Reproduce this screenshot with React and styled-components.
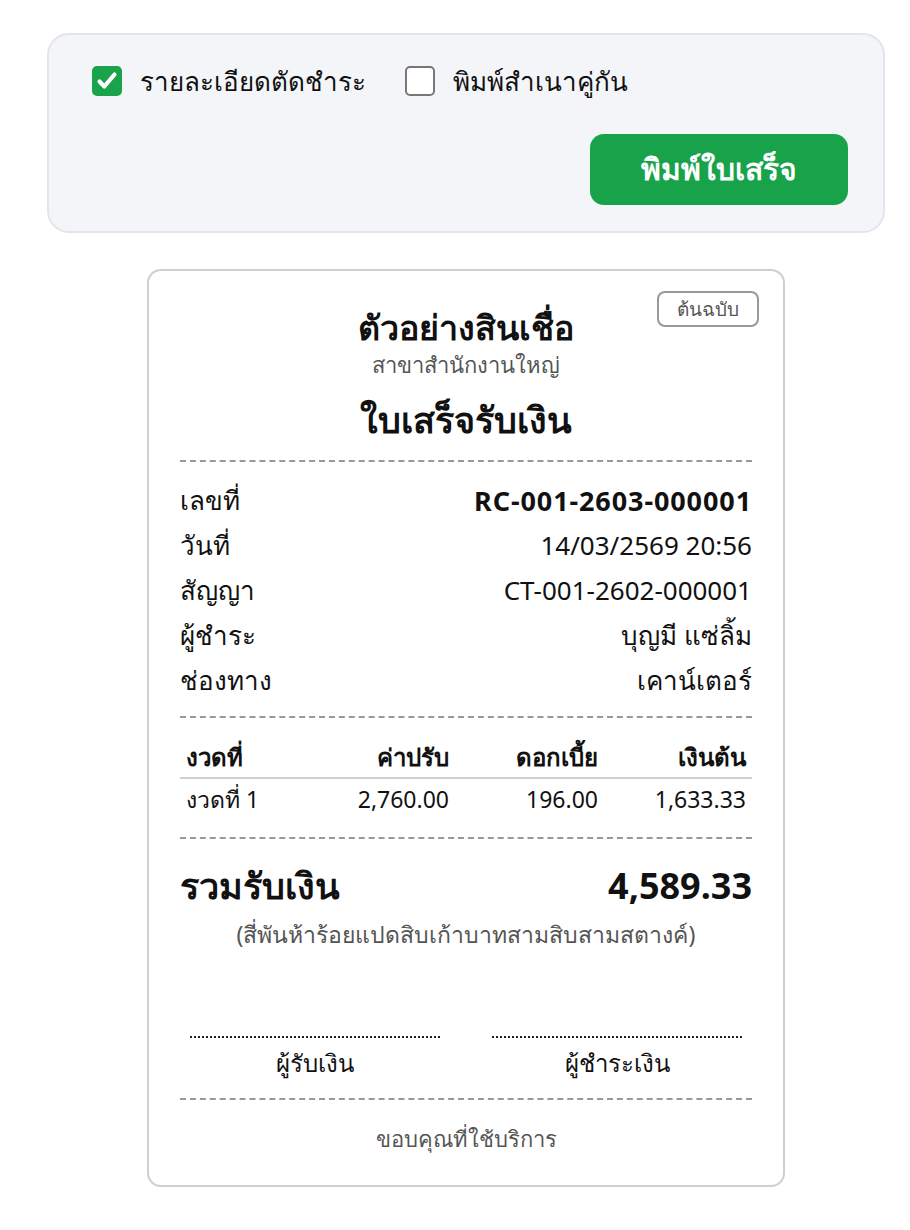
import React, { useState } from 'react'
import styled, { createGlobalStyle } from 'styled-components'

const GlobalStyle = createGlobalStyle`
  body {
    margin: 0;
    background: #ffffff;
    font-family: "Noto Sans", "Open Sans", sans-serif;
    color: #111;
  }
`

const Page = styled.div`
  width: 838px;
  margin-left: 47px;
  padding-top: 33px;
  padding-bottom: 40px;
  display: flex;
  flex-direction: column;
  align-items: center;
  gap: 36px;
`

const Panel = styled.div`
  box-sizing: border-box;
  width: 100%;
  background: #f4f5f9;
  border: 2px solid #e3e5ec;
  border-radius: 22px;
  padding: 28px 35px 26px 43px;
  display: flex;
  flex-direction: column;
  gap: 35px;
`

const OptionRow = styled.div`
  display: flex;
  align-items: center;
  gap: 39px;
`

const Option = styled.label`
  display: flex;
  align-items: center;
  gap: 18px;
  font-size: 26px;
  line-height: 36px;
  cursor: pointer;
`

const Box = styled.span`
  box-sizing: border-box;
  width: 30px;
  height: 30px;
  border-radius: 5px;
  display: flex;
  align-items: center;
  justify-content: center;
  background: ${p => (p.checked ? '#1aa34a' : '#fff')};
  border: 2px solid ${p => (p.checked ? '#1aa34a' : '#777')};
`

const ButtonRow = styled.div`
  display: flex;
  justify-content: flex-end;
`

const PrintButton = styled.button`
  width: 258px;
  height: 71px;
  border: none;
  border-radius: 14px;
  background: #18a34a;
  color: #fff;
  font-family: inherit;
  font-size: 30px;
  font-weight: 700;
  cursor: pointer;
`

const Receipt = styled.div`
  position: relative;
  box-sizing: border-box;
  width: 638px;
  border: 2px solid #cfcfcf;
  border-radius: 14px;
  padding: 34px 31px 29px;
  display: flex;
  flex-direction: column;
`

const Badge = styled.span`
  position: absolute;
  top: 20px;
  right: 24px;
  padding: 2px 18px;
  border: 2px solid #999;
  border-radius: 8px;
  color: #555;
  font-size: 19px;
  line-height: 28px;
`

const Company = styled.div`
  text-align: center;
  font-size: 34px;
  font-weight: 700;
  line-height: 44px;
`

const Branch = styled.div`
  text-align: center;
  font-size: 22px;
  color: #555;
  line-height: 30px;
`

const DocTitle = styled.div`
  text-align: center;
  font-size: 36px;
  font-weight: 700;
  line-height: 50px;
  margin-top: 16px;
`

const Dashed = styled.div`
  border-top: 2px dashed #999;
  margin: ${p => p.$m || '18px 0'};
`

const InfoList = styled.div`
  display: flex;
  flex-direction: column;
`

const InfoRow = styled.div`
  display: flex;
  justify-content: space-between;
  align-items: center;
  font-size: 26px;
  line-height: 45px;
`

const InfoValue = styled.span`
  font-weight: ${p => (p.bold ? 700 : 400)};
  font-size: ${p => (p.bold ? '27px' : 'inherit')};
  letter-spacing: ${p => (p.bold ? '0.9px' : 'normal')};
`

const Table = styled.div`
  display: grid;
  grid-template-columns: 120px 155px 149px 148px;
`

const Cell = styled.div`
  padding: 0 6px;
  text-align: ${p => (p.left ? 'left' : 'right')};
  font-size: ${p => (p.head ? '24px' : '23px')};
  font-weight: ${p => (p.head ? 700 : 400)};
  line-height: 40px;
  border-bottom: ${p => (p.head ? '2px solid #cfcfcf' : 'none')};
`

const TotalRow = styled.div`
  display: flex;
  justify-content: space-between;
  align-items: center;
  font-size: 36px;
  font-weight: 700;
  line-height: 50px;
`

const Words = styled.div`
  text-align: center;
  font-size: 23px;
  color: #555;
  line-height: 32px;
  margin-top: 7px;
`

const Signatures = styled.div`
  display: grid;
  grid-template-columns: 1fr 1fr;
  gap: 52px;
  padding: 0 10px;
  margin-top: 86px;
`

const SignBox = styled.div`
  display: flex;
  flex-direction: column;
  align-items: center;
`

const SignLine = styled.div`
  width: 100%;
  border-top: 2px dotted #222;
`

const SignLabel = styled.div`
  font-size: 24px;
  line-height: 44px;
  margin-top: 3px;
`

const Thanks = styled.div`
  text-align: center;
  font-size: 22px;
  color: #555;
  line-height: 36px;
`

const CheckIcon = () => (
  <svg width="24" height="24" viewBox="0 0 24 24" fill="none">
    <path d="M4.5 12.5l4.8 5L19.5 5.5" stroke="#fff" strokeWidth="4.2" strokeLinecap="round" strokeLinejoin="round" />
  </svg>
)

const info = [
  { label: 'เลขที่', value: 'RC-001-2603-000001', bold: true },
  { label: 'วันที่', value: '14/03/2569 20:56' },
  { label: 'สัญญา', value: 'CT-001-2602-000001' },
  { label: 'ผู้ชำระ', value: 'บุญมี แซ่ลิ้ม' },
  { label: 'ช่องทาง', value: 'เคาน์เตอร์' },
]

const head = ['งวดที่', 'ค่าปรับ', 'ดอกเบี้ย', 'เงินต้น']
const rows = [['งวดที่ 1', '2,760.00', '196.00', '1,633.33']]

export default function App() {
  const [detail, setDetail] = useState(true)
  const [copy, setCopy] = useState(false)

  return (
    <>
      <GlobalStyle />
      <Page>
        <Panel>
          <OptionRow>
            <Option onClick={() => setDetail(!detail)}>
              <Box checked={detail}>{detail && <CheckIcon />}</Box>
              รายละเอียดตัดชำระ
            </Option>
            <Option onClick={() => setCopy(!copy)}>
              <Box checked={copy}>{copy && <CheckIcon />}</Box>
              พิมพ์สำเนาคู่กัน
            </Option>
          </OptionRow>
          <ButtonRow>
            <PrintButton>พิมพ์ใบเสร็จ</PrintButton>
          </ButtonRow>
        </Panel>

        <Receipt>
          <Badge>ต้นฉบับ</Badge>
          <Company>ตัวอย่างสินเชื่อ</Company>
          <Branch>สาขาสำนักงานใหญ่</Branch>
          <DocTitle>ใบเสร็จรับเงิน</DocTitle>
          <Dashed $m="15px 0 16px" />

          <InfoList>
            {info.map((item, i) => (
              <InfoRow key={i}>
                <span>{item.label}</span>
                <InfoValue bold={item.bold}>{item.value}</InfoValue>
              </InfoRow>
            ))}
          </InfoList>

          <Dashed $m="13px 0 19px" />

          <Table>
            {head.map((h, i) => (
              <Cell key={h} head left={i === 0}>{h}</Cell>
            ))}
            {rows.map(r =>
              r.map((c, i) => (
                <Cell key={i} left={i === 0}>{c}</Cell>
              ))
            )}
          </Table>

          <Dashed $m="18px 0 22px" />

          <TotalRow>
            <span>รวมรับเงิน</span>
            <span>4,589.33</span>
          </TotalRow>
          <Words>(สี่พันห้าร้อยแปดสิบเก้าบาทสามสิบสามสตางค์)</Words>

          <Signatures>
            <SignBox>
              <SignLine />
              <SignLabel>ผู้รับเงิน</SignLabel>
            </SignBox>
            <SignBox>
              <SignLine />
              <SignLabel>ผู้ชำระเงิน</SignLabel>
            </SignBox>
          </Signatures>

          <Dashed $m="13px 0 20px" />
          <Thanks>ขอบคุณที่ใช้บริการ</Thanks>
        </Receipt>
      </Page>
    </>
  )
}
